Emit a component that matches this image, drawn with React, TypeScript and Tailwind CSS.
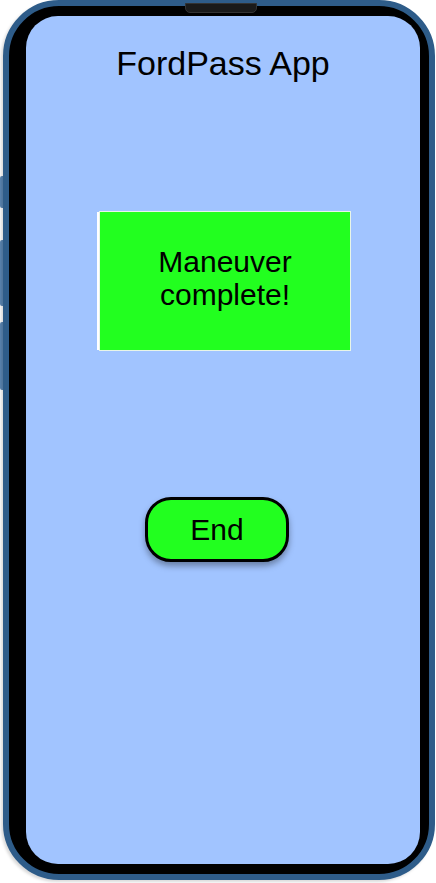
// FordPass — maneuver complete screen inside a phone mockup
export default function App() {
  return (
    <div
      className="relative h-[883px] w-[436px] overflow-hidden bg-white"
      style={{ fontFamily: '"Liberation Sans", Arial, sans-serif' }}
    >
      {/* side buttons */}
      <div className="absolute left-[0px] top-[176px] h-[32px] w-[5px] rounded-l-[2px] bg-[#5b86b3]" />
      <div className="absolute left-[0px] top-[240px] h-[66px] w-[5px] rounded-l-[2px] bg-[#5b86b3]" />
      <div className="absolute left-[0px] top-[322px] h-[68px] w-[5px] rounded-l-[2px] bg-[#5b86b3]" />

      {/* phone body */}
      <div className="relative ml-[3px] h-[880px] w-[432px] rounded-[56px] border-[6px] border-[#2e5c89] bg-black pb-[10px] pl-[17px] pr-[9px] pt-[10px] shadow-[-2px_2px_3px_rgba(0,0,0,0.15)]">
        {/* speaker */}
        <div className="absolute left-[176px] top-[-3px] h-[10px] w-[72px] rounded-b-[5px] border border-[#333] bg-[#1a1a1a]" />

        {/* screen */}
        <div className="flex h-full w-full flex-col items-center rounded-[32px] bg-[#a1c4ff] pt-[28px]">
          <h1 className="text-[34px] leading-[38px] text-black">FordPass App</h1>

          <div className="mt-[129px] flex h-[140px] w-[252px] translate-x-[2px] items-center justify-center border border-[#e8f5e8] bg-[#22ff1f] pb-[7px] shadow-[-3px_0_0_-1px_#ffffff]">
            <p className="text-center text-[30px] leading-[33px] text-black">
              Maneuver
              <br />
              complete!
            </p>
          </div>

          <button
            type="button"
            className="mt-[146px] h-[65px] w-[144px] -translate-x-[6px] rounded-[26px] border-[3px] border-black bg-[#22ff1f] text-[30px] leading-none text-black shadow-[0_4px_6px_rgba(0,0,0,0.35)]"
          >
            End
          </button>
        </div>
      </div>
    </div>
  );
}
